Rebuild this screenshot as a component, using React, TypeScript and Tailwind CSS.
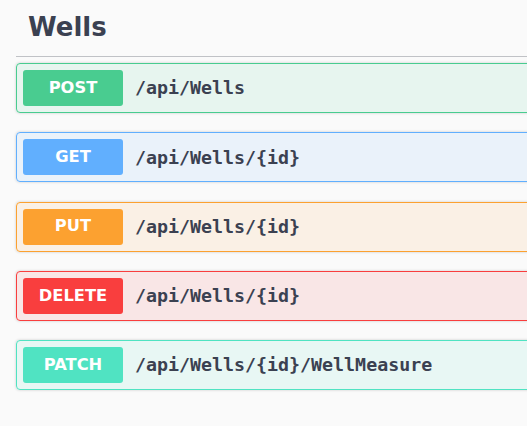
import React from 'react';

type Op = { method: string; path: string; color: string; tint: string };

const ops: Op[] = [
  { method: 'POST', path: '/api/Wells', color: 'bg-[#49cc90]', tint: 'border-[#49cc90] bg-[#49cc90]/10' },
  { method: 'GET', path: '/api/Wells/{id}', color: 'bg-[#61affe]', tint: 'border-[#61affe] bg-[#61affe]/10' },
  { method: 'PUT', path: '/api/Wells/{id}', color: 'bg-[#fca130]', tint: 'border-[#fca130] bg-[#fca130]/10' },
  { method: 'DELETE', path: '/api/Wells/{id}', color: 'bg-[#f93e3e]', tint: 'border-[#f93e3e] bg-[#f93e3e]/10' },
  { method: 'PATCH', path: '/api/Wells/{id}/WellMeasure', color: 'bg-[#50e3c2]', tint: 'border-[#50e3c2] bg-[#50e3c2]/10' },
];

const OpBlock: React.FC<{ op: Op }> = ({ op }) => (
  <div className={`flex items-center h-[50px] p-[6px] border rounded-[4px] shadow-[0_0_3px_rgba(0,0,0,0.19)] ${op.tint}`}>
    <span
      className={`w-[100px] h-[36px] shrink-0 flex items-center justify-center rounded-[3px] text-white font-bold text-[16.3px] ${op.color}`}
      style={{ fontFamily: '"DejaVu Sans", sans-serif' }}
    >
      {op.method}
    </span>
    <span
      className="pl-[12px] text-[18.3px] font-bold text-[#3b4151] whitespace-nowrap"
      style={{ fontFamily: '"DejaVu Sans Mono", monospace' }}
    >
      {op.path}
    </span>
  </div>
);

export default function App() {
  return (
    <div className="w-[527px] h-[426px] overflow-hidden bg-[#fafafa]">
      <div className="w-[580px] pl-[16px]">
        <div className="h-[57px] pt-[12px] pl-[12px] border-b border-[#3b4151]/30">
          <h4
            className="text-[26px] leading-[30px] font-bold text-[#3b4151]"
            style={{ fontFamily: '"DejaVu Sans", sans-serif' }}
          >
            Wells
          </h4>
        </div>
        <div className="flex flex-col gap-[19.25px] pt-[6px]">
          {ops.map((op, i) => (
            <OpBlock key={i} op={op} />
          ))}
        </div>
      </div>
    </div>
  );
}
